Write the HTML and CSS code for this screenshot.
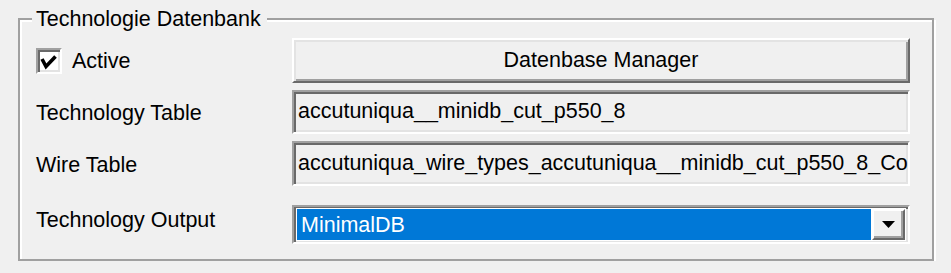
FILE: index.html
```html
<!DOCTYPE html>
<html lang="de">
<head>
    <meta charset="UTF-8">
    <meta name="viewport" content="width=device-width, initial-scale=1.0">
    <title>Technologie Datenbank</title>
    <link rel="stylesheet" href="styles.css">
</head>
<body>
    <!-- Gruppenfeld -->
    <fieldset class="group">
        <legend>Technologie Datenbank</legend>

        <div class="grid">
            <label class="check">
                <span class="check-box">
                    <svg width="18" height="18" viewBox="0 0 18 18">
                        <polyline points="2,7 6,14.5 15.5,4.5" fill="none" stroke="#000" stroke-width="3.6"/>
                    </svg>
                </span>
                <span>Active</span>
            </label>
            <button type="button" class="btn">Datenbase Manager</button>

            <span class="lbl">Technology Table</span>
            <div class="field">accutuniqua__minidb_cut_p550_8</div>

            <span class="lbl">Wire Table</span>
            <div class="field">accutuniqua_wire_types_accutuniqua__minidb_cut_p550_8_Co</div>

            <span class="lbl lbl-top">Technology Output</span>
            <div class="combo">
                <div class="combo-inner">
                    <span class="combo-value">MinimalDB</span>
                    <span class="combo-btn">
                        <svg width="13" height="7" viewBox="0 0 13 7">
                            <polygon points="0,0 13,0 6.5,7" fill="#000"/>
                        </svg>
                    </span>
                </div>
            </div>
        </div>
    </fieldset>
</body>
</html>
```

FILE: styles.css
```css
/* Grundlayout */
body {
    margin: 0;
    background: #f0f0f0;
    font-family: "Liberation Sans", Arial, sans-serif;
    font-size: 21.5px;
    color: #000;
}
.group {
    margin: 7px 17px 0 18px;
    padding: 7px 22px 15px 16px;
    border: 2px solid #a0a0a0;
    box-shadow: 2px 2px 0 #fff, inset 2px 2px 0 #fff;
    min-width: 0;
}
.group legend {
    margin-left: -4px;
    padding: 0 6px 0 4px;
    line-height: 24px;
    background: #f0f0f0;
}
.grid {
    display: grid;
    grid-template-columns: 256px 618px;
    grid-template-rows: 45px 44px 45px 51px;
    row-gap: 7px;
}
.grid .combo,
.grid .lbl-top {
    margin-top: 12px;
}
.lbl {
    align-self: center;
    line-height: 24px;
    padding-top: 2px;
}
.lbl-top {
    align-self: start;
    padding-top: 3px;
}
.check {
    display: flex;
    align-items: center;
    gap: 10px;
    padding-top: 1px;
}
.check-box {
    width: 18px;
    height: 18px;
    background: #fff;
    border: 2px solid;
    border-color: #a0a0a0 #fff #fff #a0a0a0;
    box-shadow: inset 2px 2px 0 #696969, inset -2px -2px 0 #e3e3e3;
    padding: 2px;
    display: flex;
}
.check-box svg {
    display: block;
}
.btn {
    font: inherit;
    color: #000;
    background: #f0f0f0;
    border: 2px solid;
    border-color: #fff #696969 #696969 #fff;
    box-shadow: inset 2px 2px 0 #e3e3e3, inset -2px -2px 0 #a0a0a0;
    padding: 0;
    margin: 0;
}
.field,
.combo {
    border: 2px solid;
    border-color: #a0a0a0 #fff #fff #a0a0a0;
    box-shadow: inset 2px 2px 0 #696969, inset -2px -2px 0 #e3e3e3;
    padding: 2px 4px 2px 4px;
    display: flex;
    align-items: center;
    white-space: nowrap;
    overflow: hidden;
    line-height: 24px;
}
.field {
    padding-top: 0;
}
.combo {
    padding: 2px;
}
.combo-inner {
    flex: 1;
    height: 100%;
    display: flex;
    background: #fff;
    padding: 1px;
}
.combo-value {
    flex: 1;
    background: #0078d7;
    color: #fff;
    padding-left: 4px;
    display: flex;
    align-items: center;
}
.combo-btn {
    width: 29px;
    margin-left: 1px;
    background: #f0f0f0;
    border: 2px solid;
    border-color: #fff #696969 #696969 #fff;
    box-shadow: inset -2px -2px 0 #a0a0a0;
    display: flex;
    align-items: center;
    justify-content: center;
}
```
